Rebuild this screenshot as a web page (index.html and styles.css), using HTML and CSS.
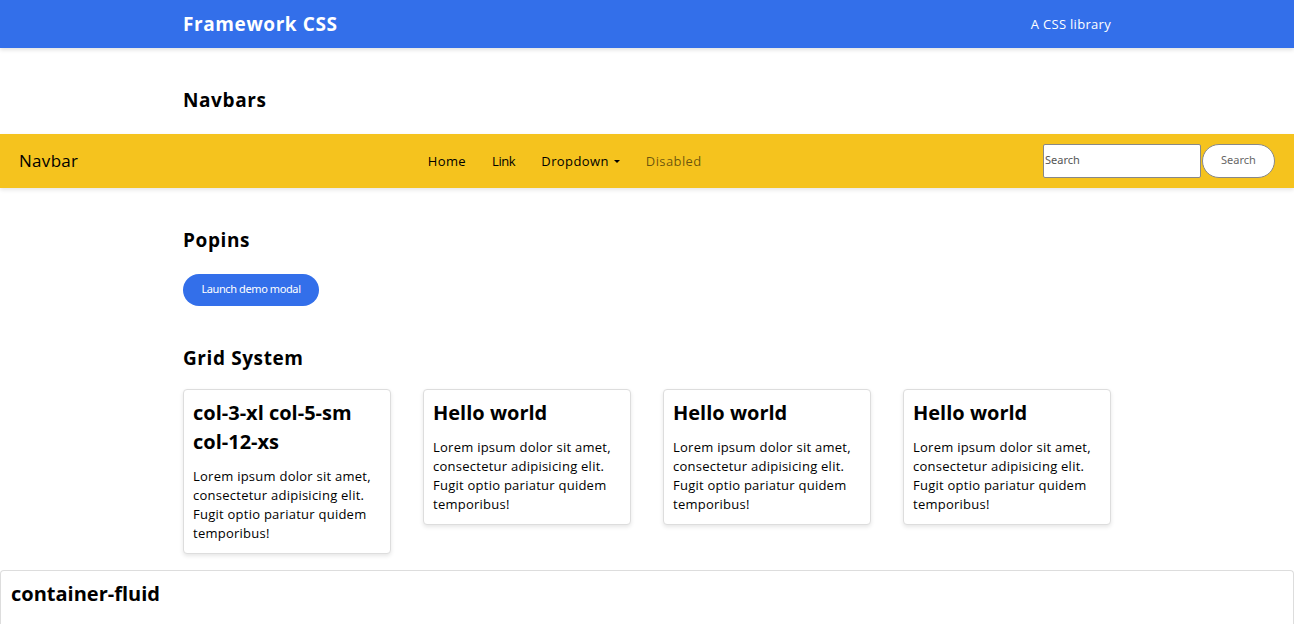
FILE: index.html
```html
<!DOCTYPE html>
<html lang="en">
<head>
<meta charset="utf-8">
<title>Framework CSS</title>
<link rel="stylesheet" href="styles.css">
</head>
<body>
<header class="topbar">
  <div class="container topbar-inner">
    <div class="brand">Framework CSS</div>
    <div class="tagline">A CSS library</div>
  </div>
</header>

<section class="container section">
  <h2 class="section-title">Navbars</h2>
</section>

<nav class="navbar">
  <div class="navbar-brand">Navbar</div>
  <ul class="nav-links">
    <li><a class="nav-link">Home</a></li>
    <li><a class="nav-link link-short">Link</a></li>
    <li><a class="nav-link dropdown">Dropdown <span class="caret"></span></a></li>
    <li><a class="nav-link disabled">Disabled</a></li>
  </ul>
  <form class="search">
    <input class="search-input" type="text" placeholder="Search">
    <button class="search-btn" type="button">Search</button>
  </form>
</nav>

<section class="container section">
  <h2 class="section-title">Popins</h2>
  <button class="btn-primary" type="button">Launch demo modal</button>
</section>

<section class="container section">
  <h2 class="section-title">Grid System</h2>
  <div class="grid">
    <div class="card">
      <h3 class="card-title">col-3-xl col-5-sm col-12-xs</h3>
      <p class="card-text">Lorem ipsum dolor sit amet, consectetur adipisicing elit. Fugit optio pariatur quidem temporibus!</p>
    </div>
    <div class="card">
      <h3 class="card-title">Hello world</h3>
      <p class="card-text">Lorem ipsum dolor sit amet, consectetur adipisicing elit. Fugit optio pariatur quidem temporibus!</p>
    </div>
    <div class="card">
      <h3 class="card-title">Hello world</h3>
      <p class="card-text">Lorem ipsum dolor sit amet, consectetur adipisicing elit. Fugit optio pariatur quidem temporibus!</p>
    </div>
    <div class="card">
      <h3 class="card-title">Hello world</h3>
      <p class="card-text">Lorem ipsum dolor sit amet, consectetur adipisicing elit. Fugit optio pariatur quidem temporibus!</p>
    </div>
  </div>
</section>

<section class="fluid">
  <h3 class="card-title">container-fluid</h3>
</section>
</body>
</html>
```

FILE: styles.css
```css
* { box-sizing: border-box; }

html, body {
  margin: 0;
  padding: 0;
  background: #fff;
  color: #000;
  font-family: "Open Sans", "Noto Sans", sans-serif;
  overflow: hidden;
}

.container {
  width: 928px;
  margin: 0 auto;
}

.topbar {
  background: #336fea;
  height: 48px;
  box-shadow: 0 2px 4px rgba(0, 0, 0, 0.12);
  position: relative;
  z-index: 1;
}

.topbar-inner {
  height: 48px;
  display: flex;
  align-items: center;
  justify-content: space-between;
}

.brand {
  color: #fff;
  font-weight: 700;
  font-size: 19px;
  letter-spacing: 0.6px;
}

.tagline {
  color: #fff;
  font-size: 13px;
  letter-spacing: 0.3px;
}

.section {
  padding-top: 38px;
}

.section-title {
  margin: 0 0 20px;
  font-size: 19px;
  line-height: 28px;
  font-weight: 700;
  letter-spacing: 0.6px;
}

.navbar {
  background: #f5c31e;
  height: 54px;
  display: flex;
  align-items: center;
  justify-content: space-between;
  padding: 0 19px 1px;
  box-shadow: 0 2px 4px rgba(0, 0, 0, 0.1);
}

.navbar-brand {
  font-size: 17px;
  letter-spacing: 0.3px;
}

.nav-links {
  list-style: none;
  margin: 0 0 0 8px;
  padding: 0;
  display: flex;
  gap: 26px;
}

.nav-link {
  font-size: 13px;
  color: #000;
  display: flex;
  align-items: center;
  gap: 5px;
  letter-spacing: 0.4px;
}

.nav-link.link-short {
  letter-spacing: -0.4px;
}

.nav-link.disabled {
  color: rgba(0, 0, 0, 0.58);
}

.caret {
  width: 0;
  height: 0;
  border-left: 3.5px solid transparent;
  border-right: 3.5px solid transparent;
  border-top: 3.5px solid #000;
  margin-top: 1px;
}

.search {
  display: flex;
  align-items: center;
  gap: 1px;
  margin: 0;
}

.search-input {
  width: 158px;
  height: 34px;
  border: 1px solid #888;
  border-radius: 2px;
  padding: 0 1px 3px;
  font-family: "Noto Sans", sans-serif;
  font-size: 11px;
  color: #333;
  background: #fff;
  outline: none;
}

.search-input::placeholder {
  color: #555;
}

.search-btn {
  width: 73px;
  height: 34px;
  border: 1px solid #888;
  border-radius: 17px;
  background: #fff;
  color: #666;
  font-family: "Noto Sans", sans-serif;
  font-size: 11px;
  padding: 0 0 3px;
}

.btn-primary {
  display: block;
  background: #336fea;
  color: #fff;
  border: 0;
  border-radius: 16px;
  height: 32px;
  width: 136px;
  font-family: "Noto Sans", sans-serif;
  font-size: 11px;
  letter-spacing: -0.4px;
  padding: 0 0 3px;
}

.grid {
  display: grid;
  grid-template-columns: repeat(4, 208px);
  gap: 32px;
  align-items: start;
  margin-top: -3px;
  margin-bottom: 16px;
}

.card {
  border: 1px solid #ddd;
  border-radius: 4px;
  padding: 8px 9px 10px;
  box-shadow: 0 2px 4px rgba(0, 0, 0, 0.1);
  background: #fff;
}

.card-title {
  margin: 0 0 11px;
  font-size: 20px;
  line-height: 29px;
  font-weight: 700;
}

.card-text {
  margin: 0;
  font-size: 13px;
  line-height: 19px;
  letter-spacing: 0.25px;
}

.fluid {
  border: 1px solid #ddd;
  border-bottom: 0;
  border-radius: 4px 4px 0 0;
  padding: 8px 10px;
  height: 60px;
}
```
